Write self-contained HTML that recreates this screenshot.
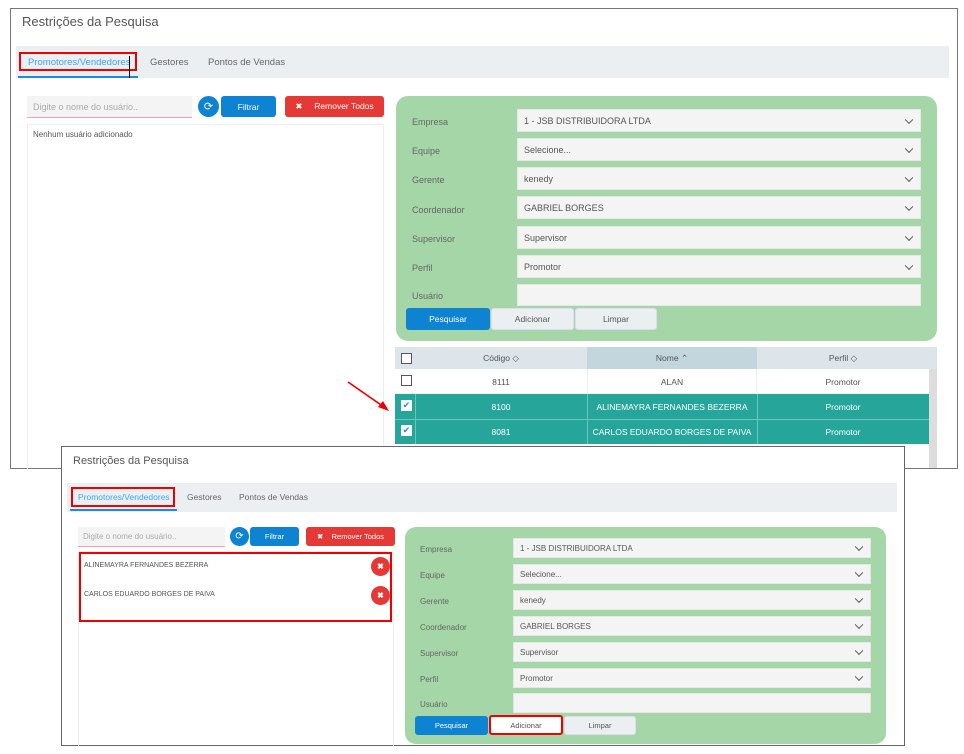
<!DOCTYPE html>
<html><head><meta charset="utf-8"><style>
*{box-sizing:border-box;margin:0;padding:0}
body{width:964px;height:754px;background:#fff;position:relative;overflow:hidden;font-family:"Liberation Sans",sans-serif;color:#555}
.a{position:absolute}
.panel{position:absolute;background:#fff;border:1px solid #777}
.sel{position:absolute;background:#f4f4f4;border:1px solid #e6e6e6;color:#555;padding-left:6px;display:flex;align-items:center}
.sel:after{content:"";position:absolute;right:8px;top:50%;width:5px;height:5px;border-right:1.3px solid #555;border-bottom:1.3px solid #555;transform:translateY(-70%) rotate(45deg)}
.nochev:after{display:none}
.lbl{position:absolute;color:#666}
.btn{position:absolute;display:flex;align-items:center;justify-content:center;border-radius:3px}
.blue{background:#0d83d1;color:#fff}
.grey{background:#eceff1;color:#555;border:1px solid #dde}
.red{background:#e53935;color:#fff}
.circ{position:absolute;border-radius:50%;background:#0d83d1;color:#fff;display:flex;align-items:center;justify-content:center}
.rx{position:absolute;border-radius:50%;background:#e53935;color:#fff;display:flex;align-items:center;justify-content:center;font-weight:bold}
.cb{position:absolute;width:11px;height:11px;border:1.5px solid #556;background:#fff}
.td{position:absolute;display:flex;align-items:center;justify-content:center;font-size:8.5px}
</style></head><body>

<!-- TOP PANEL -->
<div class="panel" style="left:10px;top:8px;width:948px;height:461px"></div>
<div class="a" style="left:22px;top:14px;font-size:13px;color:#555">Restrições da Pesquisa</div>
<div class="a" style="left:16px;top:46px;width:933px;height:32px;background:#eceff1"></div>
<div class="a" style="left:18px;top:76px;width:120px;height:2px;background:#1e88e5"></div>
<div class="a" style="left:19px;top:52px;width:118px;height:19px;border:2px solid #e00"></div>
<div class="a" style="left:28px;top:57px;font-size:9.5px;color:#42a5f5">Promotores/Vendedores</div>
<div class="a" style="left:129px;top:56px;width:1px;height:22px;background:#000"></div>
<div class="a" style="left:150px;top:57px;font-size:9.5px;color:#666">Gestores</div>
<div class="a" style="left:208px;top:57px;font-size:9.5px;color:#666">Pontos de Vendas</div>

<div class="a" style="left:27px;top:96px;width:165px;height:22px;background:#f4f4f4;border-bottom:1px solid #f0a0b0;font-size:9px;color:#aaa;padding:6px 0 0 6px">Digite o nome do usuário..</div>
<div class="circ" style="left:198px;top:96px;width:21px;height:21px;font-size:11px">⟳</div>
<div class="btn blue" style="left:221px;top:96px;width:55px;height:21px;font-size:8.5px">Filtrar</div>
<div class="btn red" style="left:285px;top:96px;width:99px;height:21px;font-size:8.5px">✖&nbsp;&nbsp;&nbsp;&nbsp;&nbsp;Remover Todos</div>
<div class="a" style="left:27px;top:124px;width:357px;height:345px;border:1px solid #eee;border-bottom:none"></div>
<div class="a" style="left:33px;top:130px;font-size:8px;color:#555">Nenhum usuário adicionado</div>

<div class="a" style="left:396px;top:96px;width:541px;height:245px;background:#a5d6a7;border-radius:12px"></div>
<div class="lbl" style="left:412px;top:117px;font-size:9px">Empresa</div>
<div class="lbl" style="left:412px;top:146px;font-size:9px">Equipe</div>
<div class="lbl" style="left:412px;top:175px;font-size:9px">Gerente</div>
<div class="lbl" style="left:412px;top:205px;font-size:9px">Coordenador</div>
<div class="lbl" style="left:412px;top:234px;font-size:9px">Supervisor</div>
<div class="lbl" style="left:412px;top:263px;font-size:9px">Perfil</div>
<div class="lbl" style="left:412px;top:291px;font-size:9px">Usuário</div>
<div class="sel" style="left:517px;top:109px;width:404px;height:23px;font-size:9px">1 - JSB DISTRIBUIDORA LTDA</div>
<div class="sel" style="left:517px;top:138px;width:404px;height:23px;font-size:9px">Selecione...</div>
<div class="sel" style="left:517px;top:167px;width:404px;height:23px;font-size:9px">kenedy</div>
<div class="sel" style="left:517px;top:196px;width:404px;height:23px;font-size:9px">GABRIEL BORGES</div>
<div class="sel" style="left:517px;top:226px;width:404px;height:23px;font-size:9px">Supervisor</div>
<div class="sel" style="left:517px;top:255px;width:404px;height:23px;font-size:9px">Promotor</div>
<div class="sel nochev" style="left:517px;top:284px;width:404px;height:22px"></div>
<div class="btn blue" style="left:406px;top:308px;width:84px;height:22px;font-size:8.5px">Pesquisar</div>
<div class="btn grey" style="left:491px;top:308px;width:83px;height:22px;font-size:8.5px">Adicionar</div>
<div class="btn grey" style="left:575px;top:308px;width:82px;height:22px;font-size:8.5px">Limpar</div>

<div class="a" style="left:395px;top:347px;width:542px;height:22px;background:#dde5ea"></div>
<div class="a" style="left:587px;top:347px;width:170px;height:22px;background:#c3d5dd"></div>
<div class="cb" style="left:401px;top:353px"></div>
<div class="td" style="left:415px;top:347px;width:172px;height:22px">Código ◇</div>
<div class="td" style="left:587px;top:347px;width:170px;height:22px">Nome ⌃</div>
<div class="td" style="left:757px;top:347px;width:172px;height:22px">Perfil ◇</div>
<div class="a" style="left:395px;top:369px;width:534px;height:25px;background:#fff;border-bottom:1px solid #eee"></div>
<div class="cb" style="left:401px;top:375px"></div>
<div class="td" style="left:415px;top:369px;width:172px;height:25px">8111</div>
<div class="td" style="left:587px;top:369px;width:170px;height:25px;border-left:1px solid #eee;border-right:1px solid #eee">ALAN</div>
<div class="td" style="left:757px;top:369px;width:172px;height:25px">Promotor</div>
<div class="a" style="left:395px;top:394px;width:534px;height:50px;background:#26a69a"></div>
<div class="a" style="left:395px;top:419px;width:534px;height:1px;background:#6cc5bb"></div>
<div class="a" style="left:415px;top:394px;width:1px;height:50px;background:#6cc5bb"></div>
<div class="a" style="left:587px;top:394px;width:1px;height:50px;background:#6cc5bb"></div>
<div class="a" style="left:757px;top:394px;width:1px;height:50px;background:#6cc5bb"></div>
<div class="cb" style="left:401px;top:400px;border-color:#fff;font-size:9px;color:#1e88e5;line-height:8px;text-align:center">✔</div>
<div class="cb" style="left:401px;top:425px;border-color:#fff;font-size:9px;color:#1e88e5;line-height:8px;text-align:center">✔</div>
<div class="td" style="left:415px;top:394px;width:172px;height:25px;color:#fff">8100</div>
<div class="td" style="left:587px;top:394px;width:170px;height:25px;color:#fff">ALINEMAYRA FERNANDES BEZERRA</div>
<div class="td" style="left:757px;top:394px;width:172px;height:25px;color:#fff">Promotor</div>
<div class="td" style="left:415px;top:419px;width:172px;height:25px;color:#fff">8081</div>
<div class="td" style="left:587px;top:419px;width:170px;height:25px;color:#fff">CARLOS EDUARDO BORGES DE PAIVA</div>
<div class="td" style="left:757px;top:419px;width:172px;height:25px;color:#fff">Promotor</div>
<div class="a" style="left:929px;top:369px;width:8px;height:99px;background:#ddd"></div>

<svg class="a" style="left:340px;top:375px" width="55" height="42"><line x1="8" y1="7" x2="44" y2="32" stroke="#e00" stroke-width="1.6"/><polygon points="49,36 38,32 43,26" fill="#e00"/></svg>

<!-- BOTTOM PANEL -->
<div class="panel" style="left:61px;top:446px;width:844px;height:300px;border-color:#666"></div>
<div class="a" style="left:73px;top:455px;font-size:11px;color:#555">Restrições da Pesquisa</div>
<div class="a" style="left:67px;top:483px;width:830px;height:29px;background:#eceff1"></div>
<div class="a" style="left:70px;top:509px;width:107px;height:2px;background:#1e88e5"></div>
<div class="a" style="left:71px;top:487px;width:104px;height:20px;border:2px solid #e00"></div>
<div class="a" style="left:78px;top:492px;font-size:8.5px;color:#42a5f5">Promotores/Vendedores</div>
<div class="a" style="left:187px;top:492px;font-size:8.5px;color:#666">Gestores</div>
<div class="a" style="left:239px;top:492px;font-size:8.5px;color:#666">Pontos de Vendas</div>

<div class="a" style="left:78px;top:527px;width:147px;height:20px;background:#f4f4f4;border-bottom:1px solid #f0a0b0;font-size:8px;color:#aaa;padding:5px 0 0 5px">Digite o nome do usuário..</div>
<div class="circ" style="left:230px;top:527px;width:19px;height:19px;font-size:10px">⟳</div>
<div class="btn blue" style="left:250px;top:527px;width:49px;height:19px;font-size:7.5px">Filtrar</div>
<div class="btn red" style="left:306px;top:527px;width:89px;height:19px;font-size:7.5px">✖&nbsp;&nbsp;&nbsp;&nbsp;Remover Todos</div>
<div class="a" style="left:78px;top:551px;width:316px;height:195px;border:1px solid #eee;border-bottom:none"></div>
<div class="a" style="left:79px;top:552px;width:313px;height:70px;border:2px solid #e00"></div>
<div class="a" style="left:84px;top:562px;font-size:7px;color:#555">ALINEMAYRA FERNANDES BEZERRA</div>
<div class="a" style="left:84px;top:591px;font-size:7px;color:#555">CARLOS EDUARDO BORGES DE PAIVA</div>
<div class="rx" style="left:371px;top:557px;width:19px;height:19px;font-size:8px">✖</div>
<div class="rx" style="left:371px;top:586px;width:19px;height:19px;font-size:8px">✖</div>

<div class="a" style="left:405px;top:527px;width:481px;height:217px;background:#a5d6a7;border-radius:11px"></div>
<div class="lbl" style="left:420px;top:545px;font-size:8px">Empresa</div>
<div class="lbl" style="left:420px;top:571px;font-size:8px">Equipe</div>
<div class="lbl" style="left:420px;top:597px;font-size:8px">Gerente</div>
<div class="lbl" style="left:420px;top:623px;font-size:8px">Coordenador</div>
<div class="lbl" style="left:420px;top:649px;font-size:8px">Supervisor</div>
<div class="lbl" style="left:420px;top:675px;font-size:8px">Perfil</div>
<div class="lbl" style="left:420px;top:700px;font-size:8px">Usuário</div>
<div class="sel" style="left:513px;top:538px;width:358px;height:20px;font-size:8px">1 - JSB DISTRIBUIDORA LTDA</div>
<div class="sel" style="left:513px;top:564px;width:358px;height:20px;font-size:8px">Selecione...</div>
<div class="sel" style="left:513px;top:590px;width:358px;height:20px;font-size:8px">kenedy</div>
<div class="sel" style="left:513px;top:616px;width:358px;height:20px;font-size:8px">GABRIEL BORGES</div>
<div class="sel" style="left:513px;top:642px;width:358px;height:20px;font-size:8px">Supervisor</div>
<div class="sel" style="left:513px;top:668px;width:358px;height:20px;font-size:8px">Promotor</div>
<div class="sel nochev" style="left:513px;top:693px;width:358px;height:20px"></div>
<div class="btn blue" style="left:415px;top:716px;width:73px;height:19px;font-size:7.5px">Pesquisar</div>
<div class="btn grey" style="left:489px;top:715px;width:74px;height:20px;font-size:7.5px;background:#fff;border:2px solid #e00">Adicionar</div>
<div class="btn grey" style="left:564px;top:716px;width:72px;height:19px;font-size:7.5px">Limpar</div>
</body></html>
